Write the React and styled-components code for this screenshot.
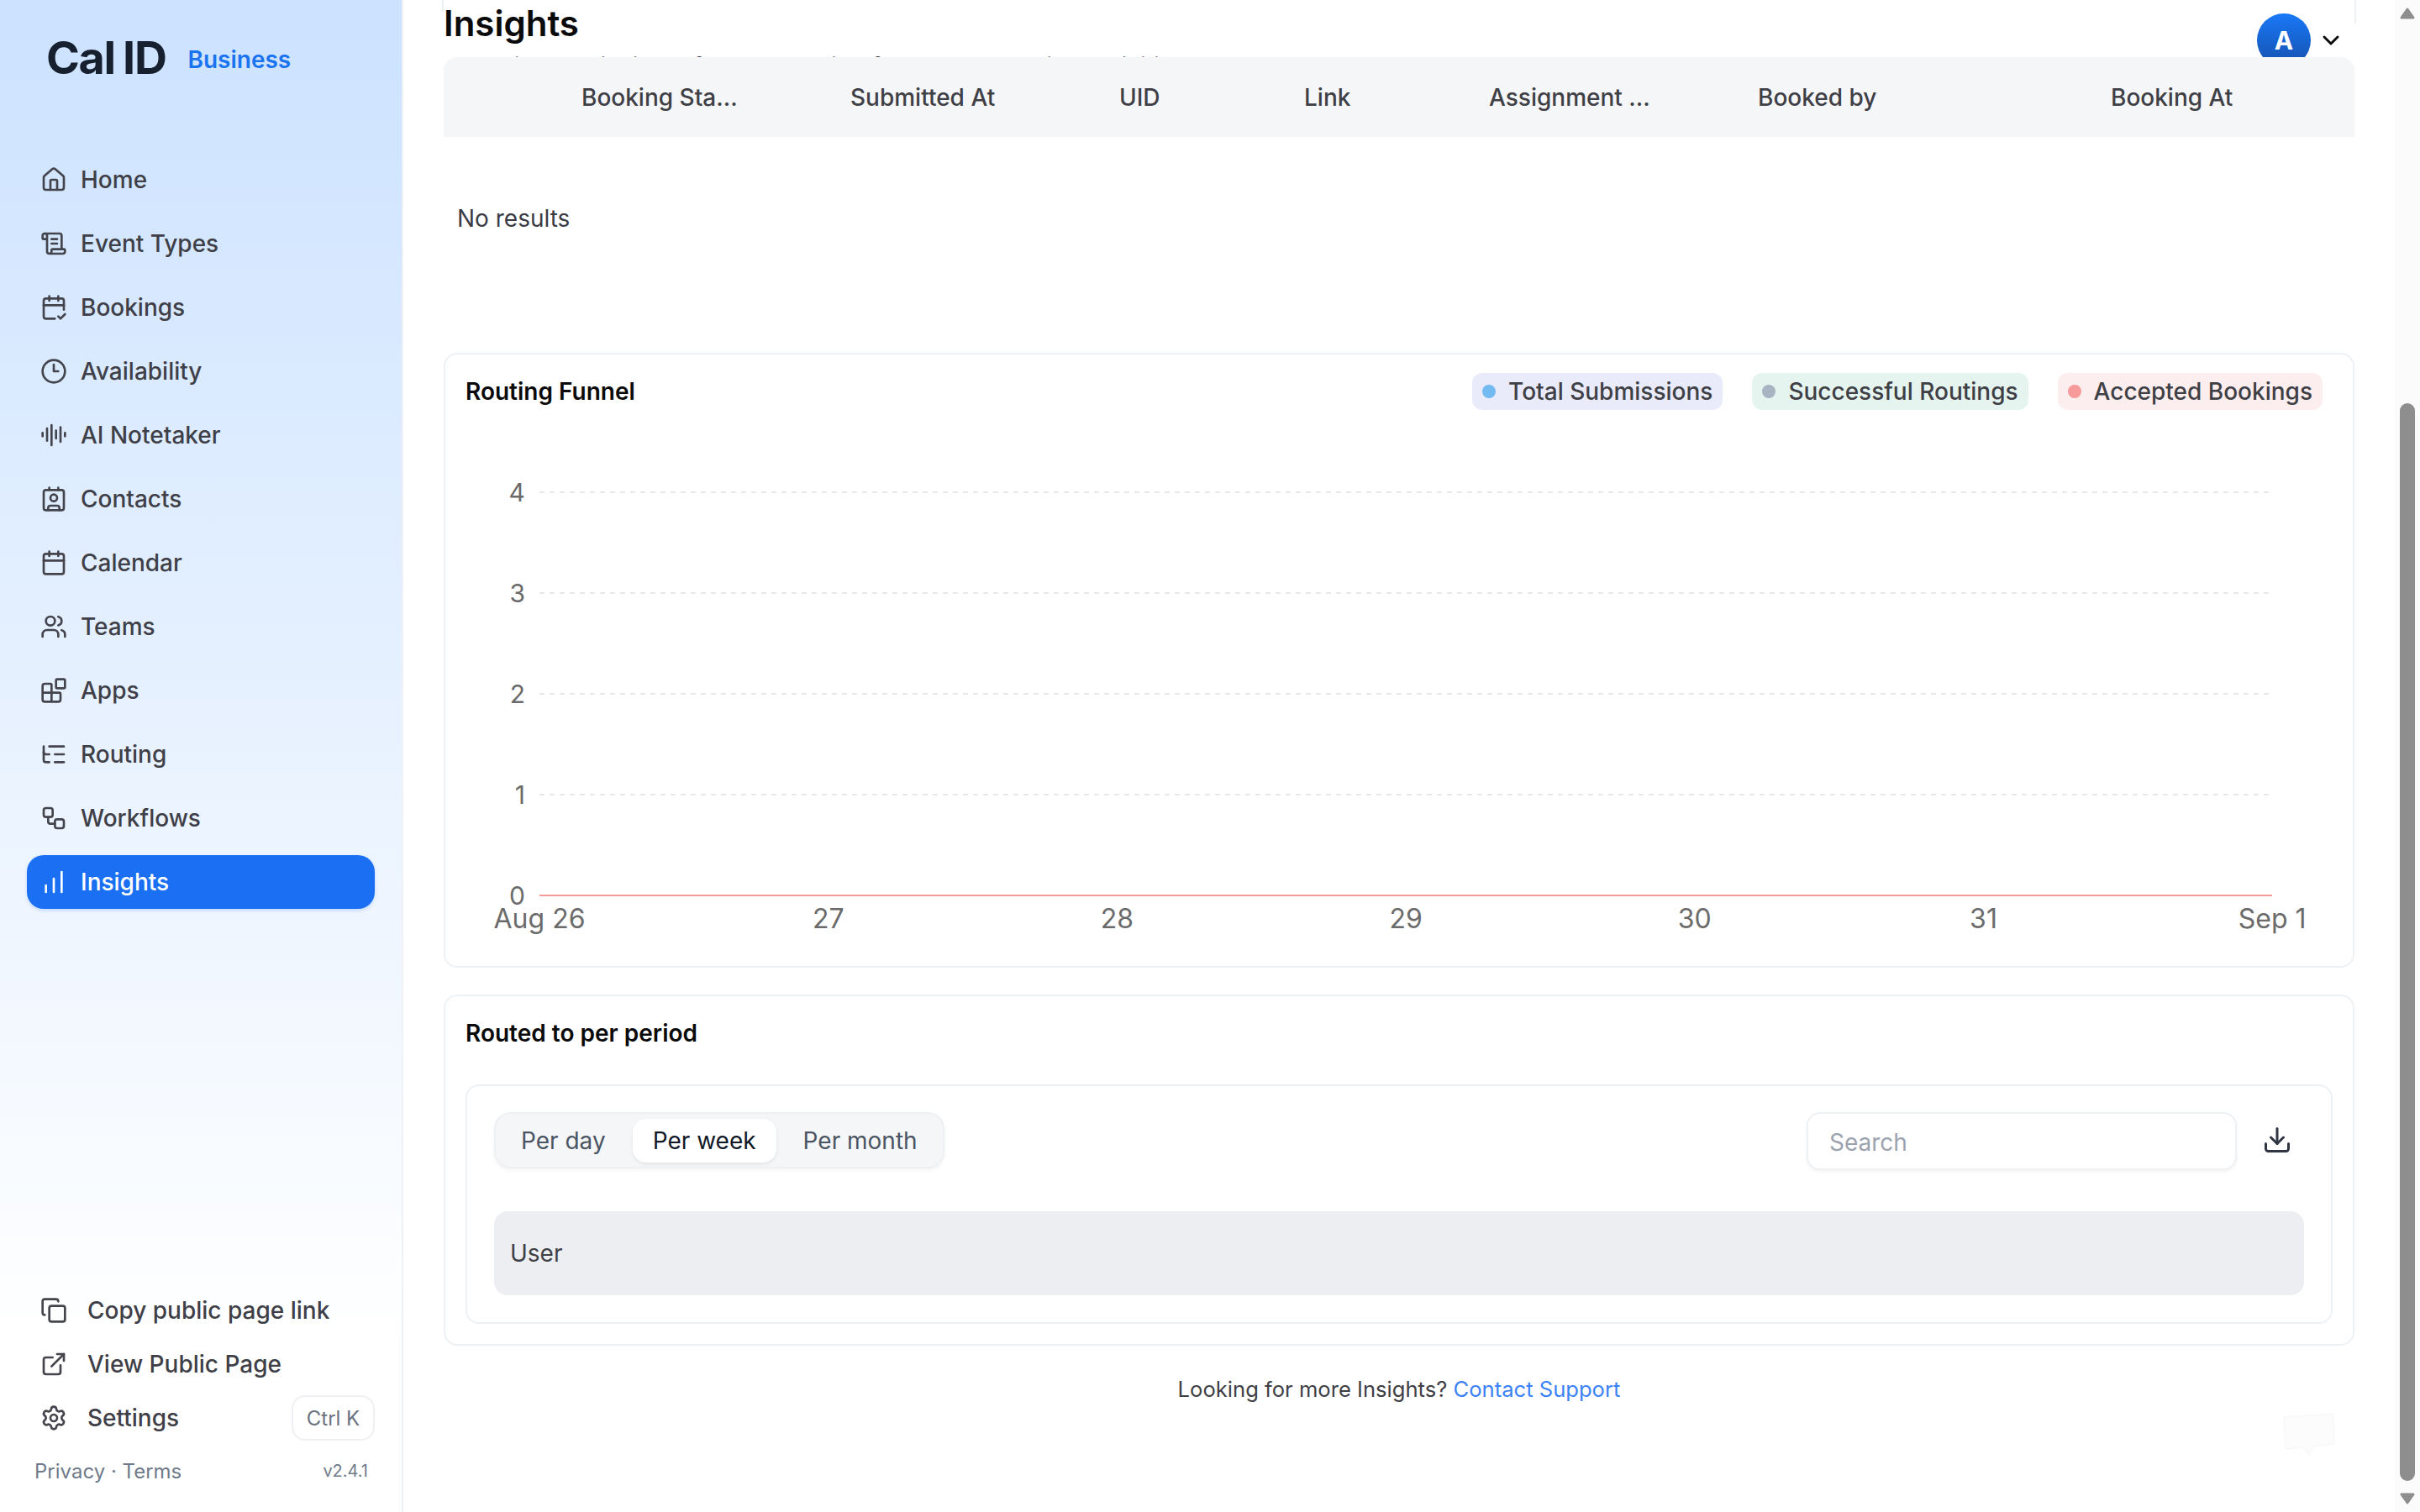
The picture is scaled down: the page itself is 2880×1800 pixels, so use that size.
import React from 'react';
import styled, { createGlobalStyle } from 'styled-components';
import {
  AudioLines,
  Blocks,
  Calendar,
  CalendarCheck2,
  ChartNoAxesColumnIncreasing,
  ChevronDown,
  Clock3,
  Contact,
  Copy,
  Download,
  ExternalLink,
  House,
  ListTree,
  ScrollText,
  Settings,
  Users,
  Workflow,
} from 'lucide-react';

const GlobalStyle = createGlobalStyle`
  html, body {
    margin: 0;
    width: 2880px;
    height: 1800px;
    overflow: hidden;
    background: #fff;
    font-family: Inter, "Liberation Sans", sans-serif;
  }
  * { box-sizing: border-box; }
`;

const NAV = [
  { label: 'Home', icon: House },
  { label: 'Event Types', icon: ScrollText },
  { label: 'Bookings', icon: CalendarCheck2 },
  { label: 'Availability', icon: Clock3 },
  { label: 'AI Notetaker', icon: AudioLines },
  { label: 'Contacts', icon: Contact },
  { label: 'Calendar', icon: Calendar },
  { label: 'Teams', icon: Users },
  { label: 'Apps', icon: Blocks },
  { label: 'Routing', icon: ListTree },
  { label: 'Workflows', icon: Workflow },
  { label: 'Insights', icon: ChartNoAxesColumnIncreasing, active: true },
];

const COLUMNS = [
  { label: 'Booking Sta...', width: 320 },
  { label: 'Submitted At', width: 320 },
  { label: 'UID', width: 220 },
  { label: 'Link', width: 220 },
  { label: 'Assignment ...', width: 320 },
  { label: 'Booked by', width: 420 },
  { label: 'Booking At', width: 300 },
];

const LEGEND = [
  { label: 'Total Submissions', bg: '#e9ebfb', dot: '#73b9f2' },
  { label: 'Successful Routings', bg: '#e5f4ef', dot: '#a9b4c2' },
  { label: 'Accepted Bookings', bg: '#fceeee', dot: '#f79a9a' },
];

const Y_TICKS = [
  { label: '4', y: 98 },
  { label: '3', y: 218 },
  { label: '2', y: 338 },
  { label: '1', y: 458 },
  { label: '0', y: 578 },
];

const X_TICKS = ['Aug 26', '27', '28', '29', '30', '31', 'Sep 1'];

export default function App() {
  return (
    <>
      <GlobalStyle />
      <Page>
        <Sidebar>
          <Brand>
            <Logo>Cal ID</Logo>
            <Plan>Business</Plan>
          </Brand>
          <Nav>
            {NAV.map(({ label, icon: Icon, active }) => (
              <NavItem key={label} $active={active}>
                <Icon size={32} strokeWidth={2} />
                {label}
              </NavItem>
            ))}
          </Nav>
          <SideBottom>
            <BottomItem>
              <Copy size={32} strokeWidth={2} />
              Copy public page link
            </BottomItem>
            <BottomItem>
              <ExternalLink size={32} strokeWidth={2} />
              View Public Page
            </BottomItem>
            <BottomItem>
              <Settings size={32} strokeWidth={2} />
              Settings
              <Shortcut>Ctrl K</Shortcut>
            </BottomItem>
            <SideFooter>
              <span>Privacy · Terms</span>
              <Version>v2.4.1</Version>
            </SideFooter>
          </SideBottom>
        </Sidebar>

        <Main>
          <Header>
            <div>
              <Title>Insights</Title>
              <Subtitle>Analytics and insights for your routing forms and booking activities</Subtitle>
            </div>
            <Account>
              <Avatar>A</Avatar>
              <ChevronDown size={32} strokeWidth={2.2} color="#0b0b0b" />
            </Account>
          </Header>

          <TableHead>
            {COLUMNS.map(col => (
              <HeadCell key={col.label} $width={col.width}>{col.label}</HeadCell>
            ))}
          </TableHead>
          <NoResults>No results</NoResults>

          <FunnelCard>
            <CardHeader>
              <CardTitle>Routing Funnel</CardTitle>
              <Legend>
                {LEGEND.map(item => (
                  <LegendChip key={item.label} $bg={item.bg}>
                    <LegendDot $color={item.dot} />
                    {item.label}
                  </LegendChip>
                ))}
              </Legend>
            </CardHeader>
            <ChartSvg viewBox="0 0 2270 661" width="2270" height="661">
              {Y_TICKS.map(t => (
                <g key={t.label}>
                  {t.label !== '0' && (
                    <line x1="112" x2="2174" y1={t.y} y2={t.y} stroke="#e8e9ec" strokeWidth="2" strokeDasharray="6 6" />
                  )}
                  <AxisText $size={30} x="95" y={t.y + 11} textAnchor="end">{t.label}</AxisText>
                </g>
              ))}
              <line x1="112" x2="2174" y1="578" y2="578" stroke="#f79a9a" strokeWidth="2" />
              {X_TICKS.map((label, i) => (
                <AxisText key={label} $size={32} x={112 + i * 343.7} y="617" textAnchor="middle">{label}</AxisText>
              ))}
            </ChartSvg>
          </FunnelCard>

          <PeriodCard>
            <CardTitle>Routed to per period</CardTitle>
            <InnerCard>
              <Toolbar>
                <Tabs>
                  <Tab>Per day</Tab>
                  <Tab $active>Per week</Tab>
                  <Tab>Per month</Tab>
                </Tabs>
                <SearchInput placeholder="Search" readOnly />
                <DownloadButton>
                  <Download size={36} strokeWidth={2} color="#2f3542" />
                </DownloadButton>
              </Toolbar>
              <UserRow>User</UserRow>
            </InnerCard>
          </PeriodCard>

          <PageFooter>
            Looking for more Insights? <SupportLink>Contact Support</SupportLink>
          </PageFooter>
        </Main>

        <Scrollbar>
          <ScrollArrow viewBox="0 0 18 14" width="18" height="14">
            <polygon points="9,2 16,12 2,12" fill="#8e8e8e" stroke="#8e8e8e" strokeWidth="3" strokeLinejoin="round" />
          </ScrollArrow>
          <ScrollThumb />
          <ScrollArrow viewBox="0 0 18 14" width="18" height="14">
            <polygon points="2,2 16,2 9,12" fill="#8e8e8e" stroke="#8e8e8e" strokeWidth="3" strokeLinejoin="round" />
          </ScrollArrow>
        </Scrollbar>

        <ChatBubble viewBox="0 0 62 52" width="62" height="52">
          <polygon points="1,5 60,1 61,37 36,40 31,51 24,41 3,43" fill="#fcfcfc" stroke="#f8f8f8" strokeWidth="1.5" strokeLinejoin="round" />
        </ChatBubble>
      </Page>
    </>
  );
}

const Page = styled.div`
  position: relative;
  display: flex;
  width: 2880px;
  height: 1800px;
  overflow: hidden;
  background: #fff;
  color: #3f3f46;
`;

const Sidebar = styled.aside`
  display: flex;
  flex-direction: column;
  flex: none;
  width: 480px;
  height: 1800px;
  border-right: 2px solid #eef1f5;
  background: linear-gradient(180deg, #cce2ff 0%, #ffffff 89%);
`;

const Brand = styled.div`
  display: flex;
  align-items: center;
  gap: 26px;
  height: 182px;
  padding: 0 0 44px 55px;
`;

const Logo = styled.div`
  font-size: 54px;
  font-weight: 700;
  line-height: 54px;
  letter-spacing: -1.4px;
  word-spacing: -2px;
  color: #17202e;
`;

const Plan = styled.span`
  margin-top: 4px;
  font-size: 28px;
  font-weight: 600;
  color: #1a73f0;
`;

const Nav = styled.nav`
  display: flex;
  flex-direction: column;
  gap: 12px;
  padding: 0 32px;
`;

const NavItem = styled.a`
  display: flex;
  align-items: center;
  gap: 16px;
  height: 64px;
  padding-left: 16px;
  border-radius: 20px;
  font-size: 28px;
  font-weight: 500;
  color: ${p => (p.$active ? '#fff' : '#3f3f48')};
  background: ${p => (p.$active ? '#1a6ff2' : 'transparent')};
  box-shadow: ${p => (p.$active ? '0 2px 4px rgba(26, 111, 242, 0.2)' : 'none')};

  svg {
    flex: none;
    color: ${p => (p.$active ? '#fff' : '#44444c')};
  }
`;

const SideBottom = styled.div`
  display: flex;
  flex-direction: column;
  margin-top: auto;
  padding: 0 32px 29px;
`;

const BottomItem = styled.a`
  display: flex;
  align-items: center;
  gap: 24px;
  height: 64px;
  padding-left: 16px;
  font-size: 28px;
  font-weight: 500;
  color: #3f3f48;

  svg {
    flex: none;
    color: #44444c;
  }
`;

const Shortcut = styled.span`
  display: flex;
  align-items: center;
  justify-content: center;
  width: 99px;
  height: 54px;
  margin-left: auto;
  border: 2px solid #eef0f3;
  border-radius: 16px;
  font-size: 24px;
  font-weight: 400;
  color: #6b7280;
`;

const SideFooter = styled.div`
  display: flex;
  align-items: center;
  justify-content: space-between;
  height: 40px;
  margin-top: 11px;
  padding: 0 8px 0 9px;
  font-size: 24px;
  color: #6f7b8a;
`;

const Version = styled.span`
  font-size: 20px;
`;

const Main = styled.main`
  position: relative;
  flex: 1;
  min-width: 0;
  padding: 0 48px;

  &::before,
  &::after {
    content: '';
    position: absolute;
    top: 0;
    width: 2px;
    background: #eef1f4;
  }
  &::before {
    left: 46px;
    height: 14px;
  }
  &::after {
    right: 46px;
    height: 28px;
  }
`;

const Header = styled.header`
  display: flex;
  align-items: flex-start;
  justify-content: space-between;
  height: 68px;
  overflow: hidden;
`;

const Title = styled.h1`
  margin: 4px 0 0;
  font-size: 42px;
  font-weight: 600;
  line-height: 48px;
  color: #0a0a0a;
`;

const Subtitle = styled.p`
  margin: 7px 0 0;
  font-size: 28px;
  line-height: 40px;
  color: #3f3f46;
`;

const Account = styled.div`
  display: flex;
  flex: none;
  align-items: center;
  gap: 8px;
  height: 80px;
  padding: 16px 12px 0 0;
`;

const Avatar = styled.div`
  display: flex;
  align-items: center;
  justify-content: center;
  width: 64px;
  height: 64px;
  border-radius: 50%;
  background: linear-gradient(180deg, #1a78f7 0%, #1450ae 100%);
  font-size: 30px;
  font-weight: 700;
  color: #fff;
`;

const TableHead = styled.div`
  display: flex;
  align-items: center;
  height: 95px;
  padding: 0 0 0 164px;
  border-radius: 16px 16px 0 0;
  background: #f5f6f8;
`;

const HeadCell = styled.div`
  flex: none;
  width: ${p => p.$width}px;
  font-size: 28px;
  font-weight: 500;
  line-height: 34px;
  color: #3f3f46;
`;

const NoResults = styled.div`
  height: 257px;
  padding: 79px 0 0 16px;
  font-size: 28px;
  line-height: 36px;
  color: #3b3b45;
`;

const Card = styled.section`
  border: 2px solid #eef1f4;
  border-radius: 16px;
  background: #fff;
`;

const FunnelCard = styled(Card)`
  height: 732px;
`;

const CardHeader = styled.div`
  display: flex;
  align-items: center;
  justify-content: space-between;
  padding: 22px 36px 0 24px;
`;

const CardTitle = styled.h2`
  margin: 0;
  font-size: 28px;
  font-weight: 600;
  line-height: 36px;
  color: #0a0a0a;
`;

const Legend = styled.div`
  display: flex;
  align-items: center;
`;

const LegendChip = styled.div`
  display: flex;
  align-items: center;
  gap: 15px;
  height: 44px;
  padding: 0 12px;
  border-radius: 12px;
  background: ${p => p.$bg};
  font-size: 28px;
  font-weight: 500;
  color: #3f3f46;

  & + & {
    position: relative;
    margin-left: 35px;
  }
  & + &::before {
    content: '';
    position: absolute;
    left: -18px;
    top: 2px;
    bottom: 2px;
    width: 1px;
    background: #eef1f4;
  }
`;

const LegendDot = styled.span`
  width: 16px;
  height: 16px;
  border-radius: 50%;
  background: ${p => p.$color};
`;

const ChartSvg = styled.svg`
  display: block;
`;

const AxisText = styled.text`
  font-family: Inter, "Liberation Sans", sans-serif;
  font-size: ${p => p.$size}px;
  fill: #6b6b6b;
`;

const PeriodCard = styled(Card)`
  height: 418px;
  margin-top: 32px;
  padding: 26px 24px 0;
`;

const InnerCard = styled(Card)`
  height: 285px;
  margin-top: 43px;
  padding: 31px 32px 0;
`;

const Toolbar = styled.div`
  display: flex;
  align-items: flex-start;
  height: 69px;
`;

const Tabs = styled.div`
  display: flex;
  align-items: center;
  gap: 8px;
  height: 67px;
  padding: 0 6px;
  border: 2px solid #eef0f3;
  border-radius: 20px;
  background: #f4f6f8;
  box-shadow: 0 2px 4px rgba(0, 0, 0, 0.05);
`;

const Tab = styled.div`
  display: flex;
  align-items: center;
  height: 52px;
  padding: 0 24px;
  border-radius: 16px;
  font-size: 28px;
  color: ${p => (p.$active ? '#111827' : '#4b5563')};
  background: ${p => (p.$active ? '#fff' : 'transparent')};
  box-shadow: ${p => (p.$active ? '0 2px 4px rgba(0, 0, 0, 0.08)' : 'none')};
`;

const SearchInput = styled.input`
  width: 512px;
  height: 69px;
  margin-left: auto;
  padding: 2px 24px 0 25px;
  border: 2px solid #eef1f4;
  border-radius: 16px;
  outline: none;
  background: #fff;
  box-shadow: 0 2px 4px rgba(0, 0, 0, 0.05);
  font-family: inherit;
  font-size: 28px;

  &::placeholder {
    color: #9ca3af;
  }
`;

const DownloadButton = styled.div`
  display: flex;
  margin: 15px 14px 0 30px;
`;

const UserRow = styled.div`
  display: flex;
  align-items: center;
  height: 100px;
  margin-top: 49px;
  padding-left: 19px;
  border-radius: 16px;
  background: #edeef2;
  font-size: 28px;
  color: #3f3f46;
`;

const PageFooter = styled.div`
  margin-top: 35px;
  font-size: 25.6px;
  line-height: 34px;
  text-align: center;
  color: #3f3f46;
`;

const SupportLink = styled.a`
  color: #3b82f6;
`;

const Scrollbar = styled.div`
  display: flex;
  flex-direction: column;
  flex: none;
  width: 30px;
  height: 1800px;
  padding: 9px 0 9px 6px;
  background: #fbfbfb;
`;

const ScrollArrow = styled.svg`
  display: block;
  flex: none;
`;

const ScrollThumb = styled.div`
  flex: none;
  width: 18px;
  height: 1283px;
  margin: 457px 0 14px;
  border-radius: 9px;
  background: #8e8e8e;
`;

const ChatBubble = styled.svg`
  position: absolute;
  left: 2717px;
  top: 1682px;
`;
